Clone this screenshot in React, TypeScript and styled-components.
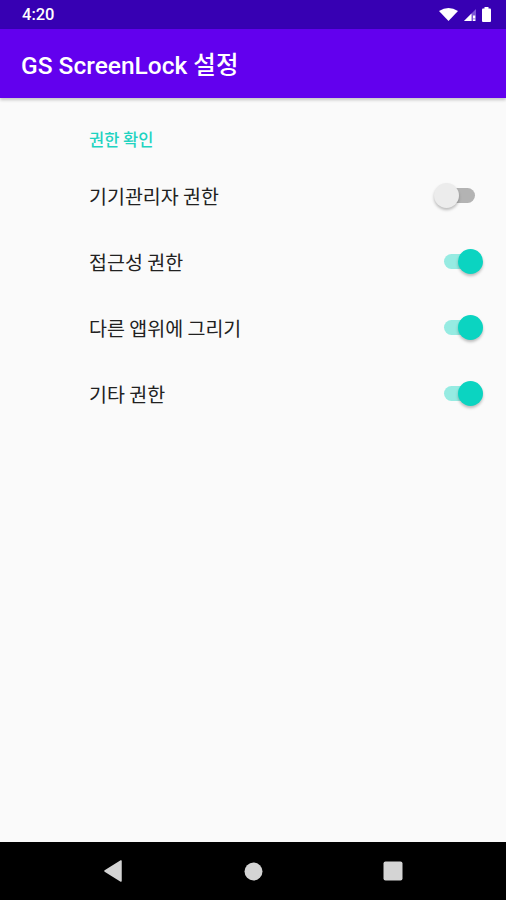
import React from "react";
import styled, { createGlobalStyle } from "styled-components";

const Global = createGlobalStyle`
  html, body { margin: 0; padding: 0; }
  body { background: #fafafa; font-family: Roboto, "Noto Sans CJK KR", sans-serif; }
`;

const Screen = styled.div`
  width: 506px;
  height: 900px;
  display: flex;
  flex-direction: column;
  background: #fafafa;
  overflow: hidden;
`;

const StatusBar = styled.div`
  height: 29px;
  background: #3700b3;
  display: flex;
  align-items: center;
  justify-content: space-between;
  padding: 0 15px 0 22px;
  color: #fff;
  font-family: Roboto, sans-serif;
  font-weight: 500;
  font-size: 16.5px;
  flex-shrink: 0;
`;

const StatusIcons = styled.div`
  display: flex;
  align-items: center;
  gap: 6px;
`;

const AppBar = styled.header`
  height: 69px;
  background: #6200ee;
  display: flex;
  align-items: center;
  padding-left: 21px;
  color: #fff;
  font-family: Roboto, "Noto Sans CJK KR", sans-serif;
  font-weight: 500;
  font-size: 24.5px;
  box-shadow: 0 2px 3px rgba(0, 0, 0, 0.22);
  position: relative;
  z-index: 1;
  flex-shrink: 0;
`;

const Content = styled.main`
  flex: 1;
  display: flex;
  flex-direction: column;
`;

const Category = styled.div`
  height: 64px;
  box-sizing: border-box;
  padding: 31px 0 0 89px;
  line-height: 20px;
  font-family: "Noto Sans CJK KR", sans-serif;
  font-size: 16.5px;
  font-weight: 500;
  color: #1fd3c1;
`;

const Row = styled.div`
  height: 66px;
  display: flex;
  align-items: center;
  padding-left: 89px;
`;

const Label = styled.div`
  flex: 1;
  font-family: "Noto Sans CJK KR", sans-serif;
  font-size: 19.5px;
  color: #212121;
`;

const SwitchBox = styled.div<{ $offset: number }>`
  position: relative;
  width: 40px;
  height: 24px;
  margin-right: ${(p) => p.$offset}px;
`;

const Track = styled.div<{ $on: boolean }>`
  position: absolute;
  left: ${(p) => (p.$on ? 1 : 7)}px;
  top: 5px;
  width: 34px;
  height: 15px;
  border-radius: 8px;
  background: ${(p) => (p.$on ? "#96ebe2" : "#b3b3b3")};
`;

const Thumb = styled.div<{ $on: boolean }>`
  position: absolute;
  top: 0;
  ${(p) => (p.$on ? "right: 0;" : "left: 0;")}
  width: 25px;
  height: 25px;
  border-radius: 50%;
  background: ${(p) => (p.$on ? "#0bd4c1" : "#ececec")};
  box-shadow: 0 2px 3px rgba(0, 0, 0, 0.25);
`;

const NavBar = styled.nav`
  height: 58px;
  background: #000;
  display: flex;
  align-items: center;
  justify-content: center;
  flex-shrink: 0;
`;

const NavSlot = styled.div`
  width: 140px;
  display: flex;
  justify-content: center;
`;

const Switch = ({ on, offset }: { on: boolean; offset: number }) => (
  <SwitchBox $offset={offset}>
    <Track $on={on} />
    <Thumb $on={on} />
  </SwitchBox>
);

const items = [
  { label: "기기관리자 권한", on: false },
  { label: "접근성 권한", on: true },
  { label: "다른 앱위에 그리기", on: true },
  { label: "기타 권한", on: true },
];

export default function App() {
  return (
    <Screen>
      <Global />
      <StatusBar>
        <span>4:20</span>
        <StatusIcons>
          <svg width="19" height="13" viewBox="0 0 19 13">
            <path d="M0 3 Q9.5 -3 19 3 L9.5 13 Z" fill="#fff" />
          </svg>
          <svg width="12" height="12" viewBox="0 0 12 12">
            <path d="M12 0 L12 12 L0 12 Z" fill="#7b55d6" />
            <path d="M7.5 4.5 L7.5 12 L0 12 Z" fill="#fff" />
            <rect x="9" y="6.5" width="2.2" height="3" fill="#fff" />
            <rect x="9" y="10.3" width="2.2" height="1.7" fill="#fff" />
          </svg>
          <svg width="9" height="15" viewBox="0 0 9 15">
            <rect x="2.5" y="0" width="4" height="2" fill="#fff" />
            <rect x="0" y="1.5" width="9" height="13.5" rx="1" fill="#fff" />
          </svg>
        </StatusIcons>
      </StatusBar>
      <AppBar>GS ScreenLock 설정</AppBar>
      <Content>
        <Category>권한 확인</Category>
        {items.map((it) => (
          <Row key={it.label}>
            <Label>{it.label}</Label>
            <Switch on={it.on} offset={it.on ? 23 : 32} />
          </Row>
        ))}
      </Content>
      <NavBar>
        <NavSlot>
          <svg width="20" height="22" viewBox="0 0 20 22">
            <path d="M18 1 L18 21 L2 11 Z" fill="#d4d4d4" stroke="#d4d4d4" strokeWidth="1.5" strokeLinejoin="round" />
          </svg>
        </NavSlot>
        <NavSlot>
          <svg width="19" height="19" viewBox="0 0 19 19">
            <circle cx="9.5" cy="9.5" r="9" fill="#d4d4d4" />
          </svg>
        </NavSlot>
        <NavSlot>
          <svg width="20" height="20" viewBox="0 0 20 20">
            <rect x="0.5" y="0.5" width="19" height="19" rx="2" fill="#d4d4d4" />
          </svg>
        </NavSlot>
      </NavBar>
    </Screen>
  );
}
